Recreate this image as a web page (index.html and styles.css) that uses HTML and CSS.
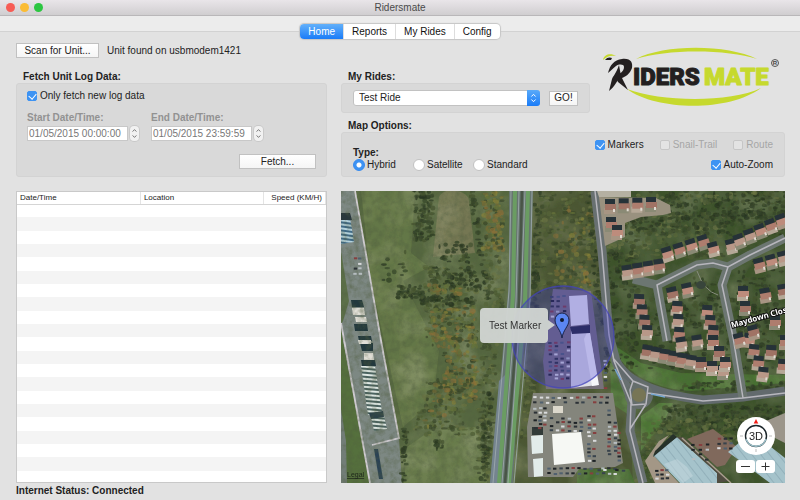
FILE: index.html
```html
<!DOCTYPE html>
<html lang="en">
<head>
<meta charset="utf-8">
<title>Ridersmate</title>
<link rel="stylesheet" href="styles.css">
</head>
<body>
<header class="titlebar">
  <div class="lights">
    <button class="light light-close" aria-label="Close"></button>
    <button class="light light-min" aria-label="Minimise"></button>
    <button class="light light-full" aria-label="Full screen"></button>
  </div>
  <h1 class="title">Ridersmate</h1>
</header>
<nav class="nav">
  <div class="tabs">
    <button class="tab tab-active">Home</button>
    <button class="tab">Reports</button>
    <button class="tab">My Rides</button>
    <button class="tab">Config</button>
  </div>
</nav>
<main class="main">
  <div class="controls-left">
    <div class="scan">
      <button class="btn btn-scan">Scan for Unit...</button>
      <span>Unit found on usbmodem1421</span>
    </div>
    <section class="group">
      <h2 class="group-title">Fetch Unit Log Data:</h2>
      <div class="box fetch">
        <label class="option"><input type="checkbox" class="check" checked>Only fetch new log data</label>
        <div class="dates">
          <div class="field">
            <label for="start">Start Date/Time:</label>
            <div class="field-row">
              <input id="start" class="date" type="text" value="01/05/2015 00:00:00" disabled>
              <button class="stepper" aria-label="Step start time" disabled><svg viewBox="0 0 9 15"><path d="M2.6 5.6 4.5 3.6 6.4 5.6M2.6 9.4 4.5 11.4 6.4 9.4"/></svg></button>
            </div>
          </div>
          <div class="field">
            <label for="end">End Date/Time:</label>
            <div class="field-row">
              <input id="end" class="date" type="text" value="01/05/2015 23:59:59" disabled>
              <button class="stepper" aria-label="Step end time" disabled><svg viewBox="0 0 9 15"><path d="M2.6 5.6 4.5 3.6 6.4 5.6M2.6 9.4 4.5 11.4 6.4 9.4"/></svg></button>
            </div>
          </div>
        </div>
        <button class="btn btn-fetch">Fetch...</button>
      </div>
    </section>
  </div>

  <div class="controls-right">
    <div class="rides-row">
      <section class="group rides">
        <h2 class="group-title"><label for="ride">My Rides:</label></h2>
        <div class="box rides-box">
          <div class="select-wrap">
            <select id="ride" class="select"><option>Test Ride</option></select>
            <svg class="select-arrows" viewBox="0 0 13 15"><path d="M4.4 6 6.5 3.8 8.6 6M4.4 9 6.5 11.2 8.6 9"/></svg>
          </div>
          <button class="btn btn-go">GO!</button>
        </div>
      </section>
      <svg class="logo" viewBox="0 0 180 64" role="img" aria-label="Ridersmate">
        <path class="lime" d="M35 14C63-1 126-1 156 14C126 4 65 4 35 14Z"/>
        <path class="lime" d="M26 44C56 66 128 67 160 43C128 58 60 57 26 44Z"/>
        <path class="lime" d="M2 15C3 9 10 8 15 11C10 10 6 11 2 15Z"/>
        <path class="ink" d="M4 15C6 12 9 12 11 13L10 15Z"/>
        <path class="ink" d="M7 28C9 20 13 15 21 14C30 13 32 18 31 23C29 29 24 32 21 33L27 45L17 37L14 31C18 29 23 27 23 22C23 19 18 19 15 21C12 23 10 26 7 28Z"/>
        <path class="ink" d="M18 20C15 29 12 31 11 34L8 46C14 42 16 35 20 31Z"/>
        <text class="logo-text ink-text" x="32" y="40">IDERS</text>
        <text class="logo-text lime-text" x="103" y="40">MATE</text>
        <circle class="mark-ring" cx="174" cy="18" r="3.5"/>
        <text class="logo-mark" x="174" y="20" text-anchor="middle">R</text>
      </svg>
    </div>
    <section class="group">
      <h2 class="group-title">Map Options:</h2>
      <div class="box map-options">
        <fieldset class="types">
          <legend>Type:</legend>
          <label class="option"><input type="radio" name="type" class="radio" checked>Hybrid</label>
          <label class="option"><input type="radio" name="type" class="radio">Satellite</label>
          <label class="option"><input type="radio" name="type" class="radio">Standard</label>
        </fieldset>
        <div class="layers">
          <label class="option"><input type="checkbox" class="check" checked>Markers</label>
          <label class="option option-off"><input type="checkbox" class="check" disabled>Snail-Trail</label>
          <label class="option option-off"><input type="checkbox" class="check" disabled>Route</label>
          <label class="option auto-zoom"><input type="checkbox" class="check" checked>Auto-Zoom</label>
        </div>
      </div>
    </section>
  </div>

  <div class="log">
    <table class="log-table">
      <thead><tr><th class="col-wide">Date/Time</th><th class="col-wide">Location</th><th class="col-speed">Speed (KM/H)</th></tr></thead>
      <tbody id="log-rows"></tbody>
    </table>
  </div>

  <div class="map">
    <svg class="map-view" viewBox="0 0 444 292" preserveAspectRatio="xMidYMid slice">
      <defs>
        <filter id="soft" x="0" y="0" width="100%" height="100%"><feGaussianBlur stdDeviation="0.6"/></filter>
        <filter id="grain" x="0" y="0" width="100%" height="100%">
          <feTurbulence type="fractalNoise" baseFrequency="0.16" numOctaves="4" seed="4"/>
          <feColorMatrix values="0 0 0 0 0.08  0 0 0 0 0.11  0 0 0 0 0.05  1.9 0 0 0 -0.72"/>
        </filter>
        <filter id="wide" x="0" y="0" width="100%" height="100%">
          <feTurbulence type="fractalNoise" baseFrequency="0.035" numOctaves="3" seed="9"/>
          <feColorMatrix values="0 0 0 0 0.55  0 0 0 0 0.56  0 0 0 0 0.38  0 1.6 0 0 -0.6"/>
        </filter>
        <pattern id="trucks" width="24" height="4" patternUnits="userSpaceOnUse" patternTransform="rotate(5)">
          <rect width="24" height="4" fill="#4b6360"/><rect width="24" height="2" fill="#dfe8e4"/>
        </pattern>
        <pattern id="vans" width="24" height="4" patternUnits="userSpaceOnUse" patternTransform="rotate(8)">
          <rect width="24" height="4" fill="#3f6a86"/><rect width="24" height="2" fill="#b4d2dd"/>
        </pattern>
        <pattern id="roof" width="7" height="7" patternUnits="userSpaceOnUse" patternTransform="rotate(-38)">
          <rect width="7" height="7" fill="#a5c3cb"/><path d="M0 0V7" stroke="#7f9eaa" stroke-width="1"/>
        </pattern>
      </defs>
      <g filter="url(#soft)">
        <rect width="444" height="292" fill="#56683f"/>
        <path d="M192 0H256L266 130 275 170 288 210 292 292H174L190 130Z" fill="#4b5732"/>
        <path d="M260 0H444V292H300L272 165Z" fill="#3d522c"/>
        <path d="M59 0H74L70 62 88 76 62 90 98 160 92 210 62 236 30 90 20 0Z" fill="#647746"/>
        <path d="M98 6C104-6 128 0 128 10L134 62 92 66Z" fill="#747752"/>
        <path d="M63 292 66 256 92 238 136 236 146 292Z" fill="#667949"/>
        <path d="M268 150C285 188 320 198 350 200L444 192V184L340 182 300 172 276 156Z" fill="#477030"/>
        <path d="M300 225 318 212H332L322 232 300 260Z" fill="#4d7735"/>
        <path d="M269 160 286 198 288 224 270 212Z" fill="#4a7035"/>
        <path d="M236 278H288L294 292H236Z" fill="#4a7035"/>
        <rect width="444" height="292" filter="url(#wide)" opacity=".4"/>

        <path d="M0 0H13L39 144 58 247 61 292H29L2 150 0 130Z" fill="#7d8883"/>
        <path d="M0 60 8 110 2 130 0 134Z" fill="#5c6f48"/>
        <path d="M0 140 28 292H0Z" fill="#546f3e"/>
        <path d="M0 218 5 250 6 292H0Z" fill="#727d77"/>
        <path d="M0 27 9 27 13 51 0 53Z" fill="url(#vans)"/>
        <path d="M0 22H9L11 29H0Z" fill="#29373d"/>
        <path d="M20 175H34L41 221 27 224Z" fill="url(#trucks)"/>
        <path d="M30 226 43 225 46 238 33 240Z" fill="url(#trucks)"/>
        <path d="M28 222 42 220 43 226 30 228Z" fill="#2c4048"/>
        <g fill="#22383d"><path d="M10 109h11l2 7H11ZM13 133h13l1 7H14ZM17 145h13l1 5H18ZM19 152h13v8H21ZM20 169h14l1 6H21Z"/></g>
        <g fill="#e0ded6"><path d="M11 117h12l1 7H12ZM14 126h11l1 5H15ZM17 149h13v4H18ZM23 162h9l1 7H23Z"/></g>
        <path d="M33 258h4l5 30h-4Z" fill="#2a4354"/>
        <path d="M14 0 39 144 58 247 31 254M0 132 29 292" fill="none" stroke="#cfcbd0" stroke-width="1.8"/>
      </g>
      <g id="plants" filter="url(#soft)"></g>
      <rect width="444" height="292" filter="url(#grain)" opacity=".5"/>
      <g filter="url(#soft)">
        <path d="M168 0H192L189 110 176 215 172 292H149L160 180 168 90Z" fill="#66756f"/>
        <path d="M168 180 158 292H149L158 190Z" fill="#74848f"/>
        <path d="M174 0 172 105 158 292M187 0 184 110 168 292" fill="none" stroke="#6b9c62" stroke-width="4"/>
        <path d="M181 0 178 110 164 292" fill="none" stroke="#4a5547" stroke-width="2.5"/>
        <path d="M170 0 168 100 152 292M178 0 175 110 161 292M184 0 180 110 167 292M191 0 189 110 173 292" fill="none" stroke="#a2adb0" stroke-width=".8"/>
        <path d="M254 0 261 60 268 144 275 170 291 210 289 240 302 292" fill="none" stroke="#687071" stroke-width="9"/>
        <path d="M275 170C286 192 320 204 362 209L402 206 444 200" fill="none" stroke="#626b6d" stroke-width="9"/>
        <path d="M444 47 409 64 387 76 372 72 356 74 316 94 326 150M387 76 381 94 392 146 402 207M316 94 292 88" fill="none" stroke="#6c7671" stroke-width="9" stroke-linejoin="round"/>
        <path d="M356 80Q363 100 377 104" fill="none" stroke="#878d7d" stroke-width="1"/>
        <ellipse cx="360" cy="94" rx="5" ry="4" fill="#39453b"/>
        <circle cx="298" cy="204" r="14" fill="#656e6c"/><circle cx="298" cy="204" r="7" fill="#777555"/>
        <path d="M254 0 261 60 268 144 273 170 290 212 289 240 302 292M272 167 292 190 307 196 305 213 291 214 289 199 292 190M307 202 362 210 402 207 444 202M305 213 289 238M444 47 409 64 387 76 372 72 356 74 316 94 326 150M387 76 381 94 392 146 402 207" fill="none" stroke="#b7b6bd" stroke-width="1.5"/>
        <path d="M274 178 280 189M310 203 324 206" stroke="#75a6d1" stroke-width="1.5"/>

        <path d="M212 98 250 100 263 198H205L202 170Z" fill="#77717a"/>
        <path d="M192 202H272L282 272 274 276 238 278 232 286H187L186 236Z" fill="#84857b"/>
        <path d="M346 248 372 238 396 256 384 274 376 276Z" fill="#80695c"/>
        <path d="M256 0H290V6H258Z" fill="#b5b0a2"/>
        <path d="M258 6 315 7 329 14 330 22 322 24 300 26 284 32 284 46 264 55Z" fill="#99917f"/>
      </g>
      <g id="houses" filter="url(#soft)"></g>
      <g filter="url(#soft)">
        <path d="M228 105 246 104 248 133 230 135Z" fill="#e9e9f0"/>
        <path d="M230 138 248 135 257 194 230 197Z" fill="#dedee6"/>
        <path d="M243 148 248 137 258 194 251 195Z" fill="#f6f6f9"/>
        <path d="M229 136 249 134 249 142 231 143Z" fill="#27293b"/>
        <path d="M211 243 240 241 244 271 213 274Z" fill="#f6f8f4"/>
        <path d="M190 245 202 244V262L191 263ZM192 268 202 267V285L193 286Z" fill="#e2ecea"/>
        <path d="M191 244H202V236H191Z" fill="#303a39"/>
        <path d="M212 215H222V222H212Z" fill="#dcd8cc"/>
        <path d="M304 270 318 250 328 244 312 264 338 292H314Z" fill="#a39786"/>
        <path d="M312 264 336 246 376 282V292H339Z" fill="url(#roof)"/>
        <path d="M314 260 332 243 336 246 312 266Z" fill="#27302c"/>
        <path d="M323 273 336 268 346 276 352 285 342 292Z" fill="#c7dae0" opacity=".5"/>
        <path d="M336 246 342 246 388 290 376 292V282Z" fill="#514d43"/>
        <path d="M341 247 390 292" stroke="#aa9f8f" stroke-width="1.5"/>
        <path d="M387 261 411 241 444 267V292H429Z" fill="url(#roof)"/>
        <path d="M425 230 444 222V252L432 246Z" fill="#9b958a"/>
      </g>
      <g id="cars"></g>
      <circle cx="222" cy="146" r="51" fill="#3c36c8" fill-opacity=".32" stroke="#4343bb" stroke-opacity=".75" stroke-width="1.3"/>
      <text class="road-name" transform="translate(391 137) rotate(-16)">Maydown Close</text>
      <text class="legal" x="6" y="286">Legal</text>
      <path d="M143 117H203Q207 117 207 121V129L214 134 207 139V148Q207 152 203 152H143Q139 152 139 148V121Q139 117 143 117Z" fill="#d0d4d1" fill-opacity=".97"/>
      <text class="callout-text" x="148" y="138">Test Marker</text>
      <path d="M221 147C220 139 214 135 214 129A7 7 0 0 1 228 129C228 135 222 139 221 147Z" fill="#5b86f2" stroke="#182348" stroke-width="1"/>
      <circle cx="221" cy="129" r="2" fill="#101b30"/>
    </svg>
    <div class="map-controls">
      <button class="compass" aria-label="3D view">
        <svg viewBox="0 0 38 38"><circle cx="19" cy="19" r="10.5" fill="none" stroke="#1c262b" stroke-width="1.4"/><path d="M9 22A10.5 10.5 0 0 0 29 22" fill="none" stroke="#9ec3cc" stroke-width="1.5"/><path d="M19 2 21.3 6.5H16.7Z" fill="#f21d16"/><path d="M3 19H6M32 19H35M19 32V35" stroke="#bbb"/><text x="19" y="23" text-anchor="middle">3D</text></svg>
      </button>
      <div class="zoom">
        <button class="zoom-btn" aria-label="Zoom out"><svg viewBox="0 0 19 13"><path d="M5 6.5H14"/></svg></button>
        <button class="zoom-btn" aria-label="Zoom in"><svg viewBox="0 0 19 13"><path d="M5.5 6.5H13.5M9.5 2.5V10.5"/></svg></button>
      </div>
    </div>
  </div>
</main>
<footer class="status">Internet Status: Connected</footer>
<script src="map.js"></script>
</body>
</html>
```

FILE: map.js
```js
// Empty rows of the log table.
document.getElementById('log-rows').innerHTML =
  Array(21).fill('<tr><td></td><td></td><td></td></tr>').join('');

// Repeatable random numbers, so the scenery is the same on every load.
let seed = 11;
const rnd = () => (seed = (seed * 16807) % 2147483647) / 2147483647;
const pick = list => list[Math.floor(rnd() * list.length)];

const dark = ['#2d3c23', '#35452a', '#283520', '#44532f'];
const autumn = ['#86803a', '#8c7038', '#66733a', '#38452a', '#746a35'];
const moss = ['#56663a', '#6a7443', '#3c4a2b', '#4c5b33'];

// Woods: x, y, width, height, number of trees, colours, slant per pixel of y.
const woods = [
  [73, 0, 19, 52, 90, dark, 0], [98, 50, 32, 22, 34, dark, 0],
  [84, 74, 52, 74, 210, moss, 0], [84, 76, 48, 22, 70, dark, .4],
  [56, 95, 26, 12, 45, dark, 0], [80, 104, 56, 10, 60, dark, 0],
  [88, 94, 32, 9, 30, autumn, 0], [90, 115, 44, 45, 110, autumn, 0],
  [102, 145, 34, 66, 150, autumn, 0], [84, 190, 48, 48, 120, moss, -.2],
  [96, 188, 26, 50, 45, autumn, -.3],
  [128, 0, 5, 110, 55, dark, .16], [142, 0, 20, 60, 130, autumn, 0],
  [144, 45, 18, 100, 80, moss, 0], [140, 150, 16, 138, 150, moss, -.04],
  [144, 200, 9, 92, 50, dark, -.06], [61, 236, 5, 55, 28, dark, 0],
  [66, 236, 72, 8, 22, moss, 0], [37, 60, 28, 30, 14, dark, 0],
  [94, 250, 8, 8, 14, dark, 0],
  [194, 0, 60, 102, 220, moss, 0], [194, 0, 7, 140, 60, dark, -.03],
  [212, 15, 40, 84, 90, autumn, 0], [246, 0, 7, 140, 70, dark, .08],
  [184, 180, 14, 70, 55, moss, -.06],
  [264, 22, 120, 45, 260, moss, 0], [266, 20, 178, 24, 210, dark, -.1],
  [264, 60, 34, 120, 180, dark, 0], [320, 0, 124, 28, 180, dark, 0],
  [266, 0, 170, 12, 70, moss, 0], [298, 106, 144, 72, 260, dark, 0],
  [340, 84, 40, 50, 40, dark, 0], [395, 70, 48, 60, 80, dark, 0],
  [320, 214, 122, 28, 280, dark, 0], [312, 228, 120, 25, 180, moss, 0],
  [296, 240, 18, 50, 60, moss, 0], [360, 244, 28, 16, 30, autumn, 0],
  [340, 190, 104, 9, 60, dark, -.1]
];
let out = '';
for (const [x, y, w, h, n, colours, slant] of woods) {
  for (let i = 0; i < n; i++) {
    const dy = rnd() * h;
    out += `<ellipse cx="${(x + rnd() * w + dy * slant).toFixed(1)}" cy="${(y + dy).toFixed(1)}" rx="${(1 + rnd() * 2.2).toFixed(1)}" ry="${(.8 + rnd() * 1.8).toFixed(1)}" fill="${pick(colours)}" opacity=".75"/>`;
  }
}
document.getElementById('plants').innerHTML = out;

// Houses in rows: start, end, number, angle of each roof.
const rows = [
  [286, 80, 318, 74, 4, -8], [326, 62, 362, 50, 4, -18], [372, 57, 390, 54, 2, -15],
  [398, 49, 440, 29, 5, -20], [298, 109, 306, 140, 4, 2], [331, 102, 346, 98, 2, -12],
  [336, 116, 338, 142, 3, 4], [366, 120, 372, 140, 3, 4], [404, 116, 402, 101, 2, 0],
  [418, 73, 442, 66, 3, -15], [424, 103, 442, 99, 2, -10], [434, 130, 444, 150, 2, 0],
  [306, 160, 350, 170, 6, 8], [340, 152, 356, 150, 2, -8], [360, 172, 382, 180, 3, 0],
  [372, 150, 384, 172, 3, 0], [408, 148, 422, 182, 4, 6], [398, 148, 412, 140, 2, -15],
  [430, 160, 442, 174, 2, 4], [269, 14, 310, 12, 4, 0], [270, 32, 276, 40, 2, 0]
];
out = '';
for (const [x1, y1, x2, y2, n, turn] of rows) {
  for (let i = 0; i < n; i++) {
    const t = n > 1 ? i / (n - 1) : 0;
    const x = x1 + (x2 - x1) * t, y = y1 + (y2 - y1) * t;
    out += `<g transform="translate(${x.toFixed(1)} ${y.toFixed(1)}) rotate(${turn})"><rect x="-6" y="3" width="11" height="6" fill="${pick(['#b5a897', '#a79583', '#8a8a74'])}"/><rect x="-5" y="-6" width="10" height="6" fill="#283137"/><rect x="-5" y="-1" width="11" height="6" fill="${pick(['#ae7d6e', '#bd8c7c', '#a07365', '#b89888'])}"/><rect x="3" y="4" width="2" height="3" fill="#e0dad1"/></g>`;
  }
}
document.getElementById('houses').innerHTML = out;

// Parked cars: x, y, columns, rows, gaps between them.
const lots = [
  [209, 104, 3, 6, 6, 5], [207, 150, 4, 10, 6, 4], [262, 160, 1, 10, 5, 4],
  [192, 205, 13, 2, 6, 5], [192, 216, 3, 6, 5, 4], [208, 226, 6, 4, 6, 4],
  [246, 224, 2, 12, 5, 4], [266, 218, 2, 12, 6, 4], [276, 240, 1, 8, 5, 4],
  [206, 276, 12, 2, 6, 5], [256, 278, 5, 1, 6, 4], [350, 252, 3, 4, 7, 5],
  [376, 246, 3, 3, 6, 5], [314, 278, 3, 3, 5, 4], [12, 66, 2, 4, 5, 5]
];
out = '';
for (const [x, y, cols, lines, dx, dy] of lots) {
  for (let r = 0; r < lines; r++) {
    for (let c = 0; c < cols; c++) {
      if (rnd() < .14) continue;
      out += `<rect x="${(x + c * dx + rnd()).toFixed(1)}" y="${(y + r * dy + rnd()).toFixed(1)}" width="3.4" height="2" fill="${pick(['#d9dadb', '#2c3136', '#38434c', '#863f3f', '#b6bdc0', '#1e2326', '#50606f'])}"/>`;
    }
  }
}
document.getElementById('cars').innerHTML = out;
```

FILE: styles.css
```css
* { box-sizing: border-box; }

body {
  margin: 0;
  min-height: 100vh;
  display: flex;
  flex-direction: column;
  background: #e2e2e2;
  color: #222;
  font: 10px/12px "Liberation Sans", Arial, sans-serif;
}

h1, h2 { margin: 0; font-size: 10px; line-height: 12px; }
button, input, select { font: inherit; color: inherit; margin: 0; padding: 0; }

.titlebar {
  display: grid;
  grid-template-columns: 1fr auto 1fr;
  align-items: center;
  height: 16px;
  padding: 0 6px;
  background: linear-gradient(#e9e5e9, #d0ced0);
  border-bottom: 1px solid #b9b7b9;
}
.lights { display: flex; gap: 5px; }
.light { width: 9px; height: 9px; border: 0; border-radius: 50%; }
.light-close { background: #f75c55; }
.light-min { background: #fbbc34; }
.light-full { background: #2cc641; }
.title { font-weight: normal; color: #4a4a4a; }

.nav {
  display: flex;
  justify-content: center;
  padding: 8px 0 4px;
  background: linear-gradient(#ececec 15px, #d2d2d2 15px, #d2d2d2 16px, #e2e2e2 16px);
}
.tabs {
  display: flex;
  background: #fff;
  border-radius: 4px;
  box-shadow: 0 0 1px 1px #c6c6c6;
}
.tab {
  height: 15px;
  padding: 0 8px;
  border: 0;
  border-left: 1px solid #ddd;
  background: none;
  color: #111;
}
.tab-active {
  border: 0;
  border-radius: 4px 0 0 4px;
  background: linear-gradient(#62b0fa, #1a7cf8);
  color: #fff;
}

.main {
  flex: 1;
  display: grid;
  grid-template-columns: 311fr 444fr;
  grid-template-rows: auto 1fr;
  gap: 14px;
  padding: 0 15px 0 16px;
}
.controls-left, .controls-right { display: flex; flex-direction: column; }
.controls-left { gap: 13px; }
.controls-right { gap: 7px; }

.scan { display: flex; align-items: center; gap: 8px; height: 15px; }
.btn {
  height: 15px;
  background: linear-gradient(#fff, #f5f5f5);
  border: 1px solid #c1c1c1;
  white-space: nowrap;
}
.btn-scan { width: 83px; }
.btn-fetch { width: 77px; align-self: flex-end; }
.btn-go { width: 29px; }

.group-title { padding-left: 7px; font-weight: bold; }
.box {
  background: #d9d9d9;
  border: 1px solid #d3d3d3;
  border-radius: 3px;
}

.fetch { display: flex; flex-direction: column; padding: 6px 10px 7px; }
.dates { display: flex; gap: 12px; margin: 10px 0 13px; }
.field { display: flex; flex-direction: column; gap: 2px; color: #929292; font-weight: bold; }
.field-row { display: flex; gap: 2px; }
.date {
  width: 101px;
  height: 15px;
  padding: 0 1px;
  border: 1px solid #c8c8c8;
  background: #fff;
  color: #777;
  font-weight: normal;
}
.stepper {
  width: 9px;
  height: 15px;
  border: 0;
  border-radius: 4px;
  background: #f1f1f1;
  box-shadow: 0 0 0 1px #c9c9c9;
}
.stepper svg { display: block; fill: none; stroke: #777; }

.option { display: flex; align-items: center; gap: 3px; line-height: 12px; white-space: nowrap; }
.option-off { color: #a6a6a6; }
.check {
  appearance: none;
  width: 10px;
  height: 10px;
  background: #fff;
  border: 1px solid #bbb;
  border-radius: 2px;
}
.check:checked { position: relative; border-color: #3d93f3; background: #3d93f3; }
.check:checked::after {
  content: "";
  position: absolute;
  left: 2px;
  top: 0;
  width: 4px;
  height: 6px;
  border: solid #fff;
  border-width: 0 1px 1px 0;
  transform: rotate(40deg);
}
.check:disabled { background: #e3e3e3; border-color: #c6c6c6; }
.radio {
  appearance: none;
  width: 12px;
  height: 12px;
  border: 1px solid #c2c2c2;
  border-radius: 50%;
  background: #fff;
}
.radio:checked { border-color: #3389f0; background: radial-gradient(#fff 2px, #3d93f3 3px); }

.rides-row { display: flex; justify-content: space-between; }
.rides { flex: 0 1 249px; padding-top: 28px; }
.rides-box { display: flex; align-items: center; gap: 9px; padding: 6px 11px; height: 30px; }
.select-wrap { position: relative; flex: 1; height: 16px; }
.select {
  appearance: none;
  width: 100%;
  height: 16px;
  padding: 0 5px;
  border: 1px solid #c2c2c2;
  border-radius: 3px;
  background: #fff;
}
.select-arrows {
  position: absolute;
  right: 0;
  top: 0;
  width: 13px;
  height: 16px;
  border-radius: 0 3px 3px 0;
  background: linear-gradient(#5aaaf9, #1a7cf8);
  fill: none;
  stroke: #fff;
}

.logo { flex: 0 0 180px; height: 64px; margin-right: 4px; margin-top: 2px; }
.lime { fill: #c6d92e; }
.ink { fill: #231f20; }
.logo-text { font: 900 24px Roboto, "Liberation Sans", sans-serif; stroke-width: 1; stroke-linejoin: round; }
.ink-text { fill: #231f20; stroke: #231f20; }
.lime-text { fill: #c6d92e; stroke: #c6d92e; }
.mark-ring { fill: none; stroke: #555; }
.logo-mark { font: bold 6px "Liberation Sans", sans-serif; fill: #444; }

.map-options {
  display: flex;
  justify-content: space-between;
  padding: 6px 11px 5px;
}
.types {
  display: grid;
  grid-template-columns: 60px 60px auto;
  margin: 0;
  padding: 0;
  border: 0;
  align-self: end;
}
.types legend { padding: 0; font-weight: bold; }
.types .option { gap: 2px; }
.layers { display: grid; grid-template-columns: repeat(3, auto); gap: 8px 16px; }
.auto-zoom { grid-column: 1 / -1; justify-self: end; }

.log { background: #fff; border: 1px solid #c9c9c9; }
.log-table { width: 100%; height: 100%; border-collapse: collapse; }
.log-table th {
  height: 12px;
  padding: 0 3px;
  border-bottom: 1px solid #d5d5d5;
  border-right: 1px solid #e4e4e4;
  font-size: 8px;
  line-height: 10px;
  font-weight: normal;
  text-align: left;
  white-space: nowrap;
}
.log-table .col-wide { width: 40%; }
.log-table .col-speed { text-align: right; }
.log-table td { padding: 0; }
.log-table tbody tr { height: 13px; }
.log-table tbody tr:nth-child(even) { background: #f4f4f4; }
.log-table tbody tr:last-child { height: 11px; }

.map { position: relative; overflow: hidden; min-height: 200px; }
.map-view { position: absolute; width: 100%; height: 100%; }
.road-name {
  font: bold 8px "Noto Sans", sans-serif;
  fill: #fff;
  stroke: #111;
  stroke-width: 2;
  paint-order: stroke;
}
.legal { font: 7px "Liberation Sans", sans-serif; fill: #1d241a; text-decoration: underline; }
.callout-text { font: 10px "Liberation Sans", sans-serif; fill: #333; }
.map-controls {
  position: absolute;
  right: 10px;
  bottom: 10px;
  display: flex;
  flex-direction: column;
  align-items: center;
  gap: 5px;
}
.compass { width: 38px; height: 38px; border: 0; border-radius: 50%; background: #fff; }
.compass svg, .zoom-btn svg { display: block; }
.compass text { font: 11px "Liberation Sans", sans-serif; fill: #222; }
.zoom { display: flex; gap: 1px; }
.zoom-btn { width: 19px; height: 13px; border: 0; border-radius: 3px; background: #fff; }
.zoom-btn svg { stroke: #333; }

.status { padding: 2px 16px 3px; font-weight: bold; }
```
